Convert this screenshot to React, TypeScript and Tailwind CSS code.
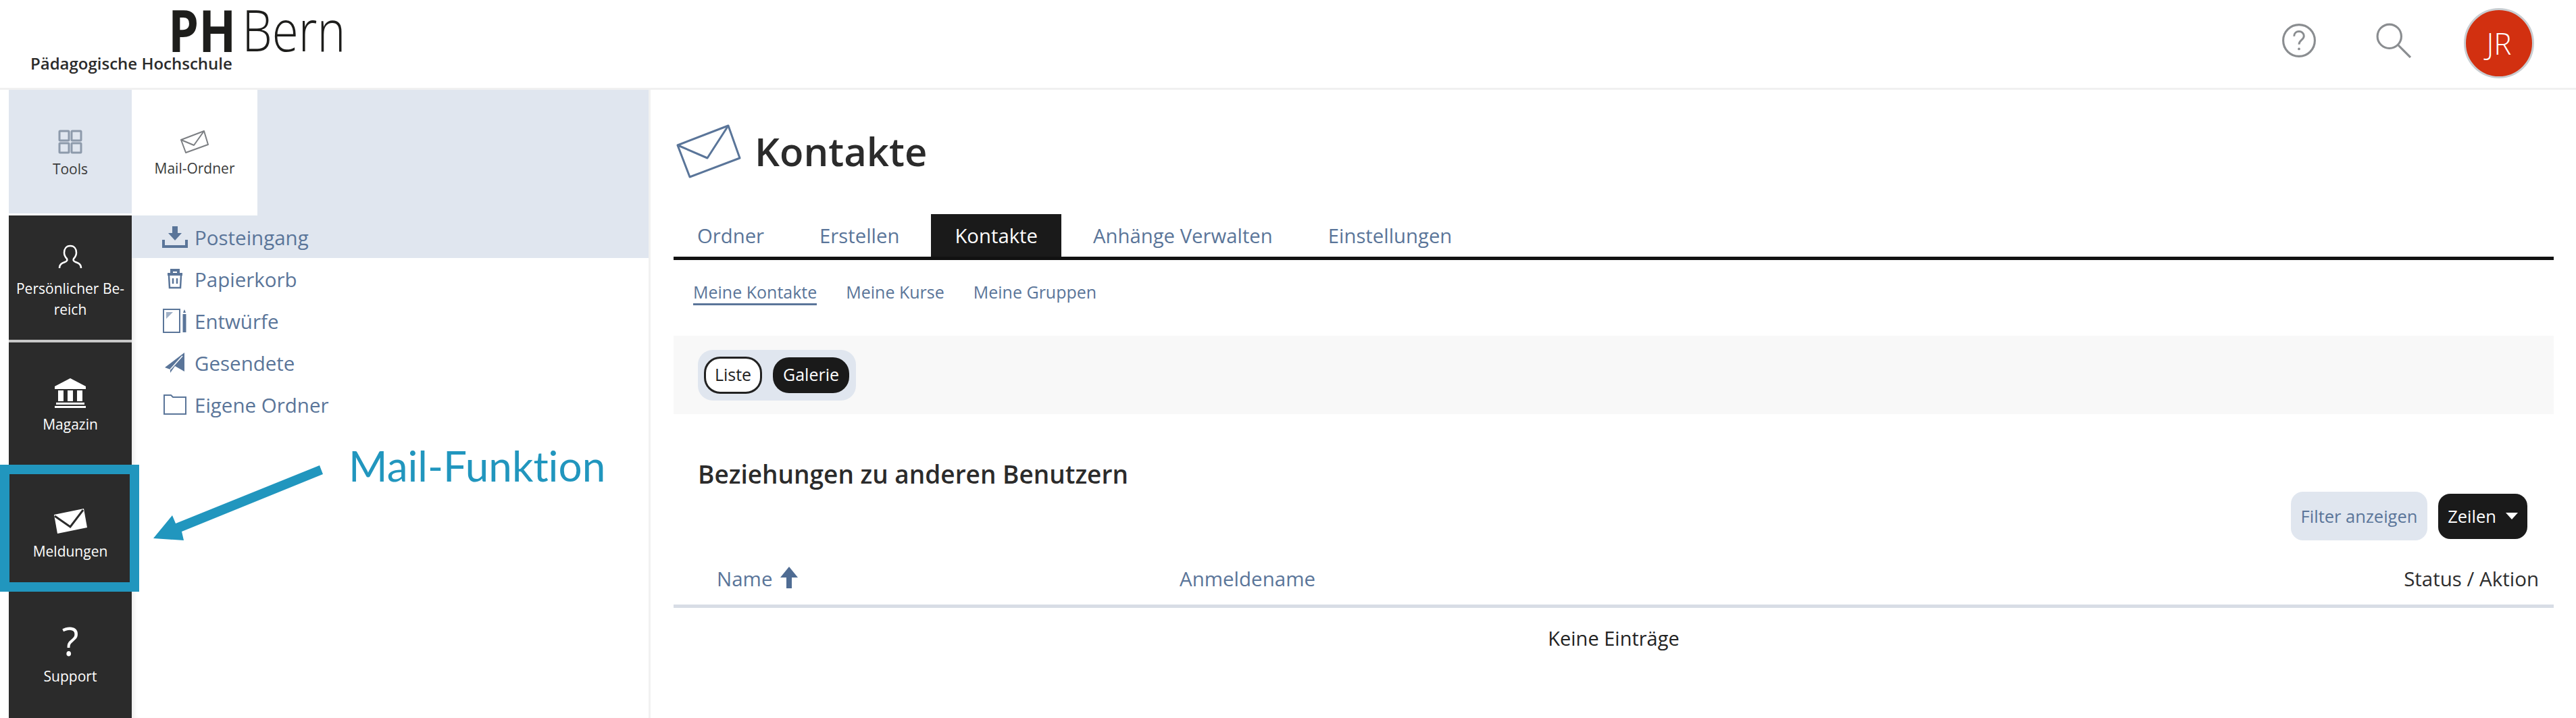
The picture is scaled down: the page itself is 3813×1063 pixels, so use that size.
import React from "react";

const Nav = ({ label, icon, className = "" }: { label: React.ReactNode; icon: React.ReactNode; className?: string }) => (
  <div className={`flex flex-col items-center bg-[#2b2b2b] text-white ${className}`}>
    {icon}
    {label}
  </div>
);

const Row = ({ icon, label, active = false }: { icon: React.ReactNode; label: string; active?: boolean }) => (
  <div className={`flex items-center pl-[45px] gap-[10px] text-[29.5px] text-[#5a7599] ${active ? "h-[63px] bg-[#e0e6ef]" : "h-[62px]"}`}>
    <span className="flex w-[38px] justify-center">{icon}</span>
    <span className="pt-[3px]">{label}</span>
  </div>
);

const tabs = ["Ordner", "Erstellen", "Kontakte", "Anhänge Verwalten", "Einstellungen"];

export default function App() {
  return (
    <div className="relative flex h-[1063px] w-[3813px] flex-col overflow-hidden bg-white font-['Open_Sans',sans-serif] text-[#2d2d2d]">
      <header className="flex h-[133px] shrink-0 items-start justify-between border-b-[3px] border-[#f0f0f0]">
        <div className="pl-[45px]">
          <div className="ml-[204px] mt-[14px] flex h-[74px] origin-bottom scale-y-[1.2] items-center text-[72px] leading-[74px] text-[#1d1d1b]">
            <b className="font-bold">PH</b>
            <span className="ml-[9px] text-[71px] font-light">Bern</span>
          </div>
          <div className="mt-[-8px] text-[24px] font-semibold leading-[28px] text-[#2b2b2b]">Pädagogische Hochschule</div>
        </div>
        <div className="mr-[62px] mt-[12px] flex items-start">
          <svg viewBox="0 0 50 50" className="mr-[88px] mt-[22px] h-[52px] w-[52px]" fill="none" stroke="#8a8d90" strokeWidth="3">
            <circle cx="25" cy="25" r="22.5" />
            <path d="M18 19c0-4.500 3.300-7 7-7s7 2.500 7 6.500c0 5.500-7 6-7 12" strokeWidth="2.800" />
            <circle cx="25" cy="37" r="1.800" fill="#8a8d90" stroke="none" />
          </svg>
          <svg viewBox="0 0 50 50" className="mr-[78px] mt-[22px] h-[52px] w-[52px]" fill="none" stroke="#8a8d90" strokeWidth="3">
            <circle cx="19" cy="19" r="17" />
            <path d="M31 31 49 49" />
          </svg>
          <div className="flex h-[104px] w-[104px] items-center justify-center rounded-full border-[3px] border-[#c9cdd1] bg-[#d23010] text-[44px] font-light text-white">JR</div>
        </div>
      </header>

      <div className="flex min-h-0 flex-1">
        <aside className="flex w-[195px] shrink-0 flex-col bg-white pl-[13px] text-center text-[21px] leading-[31px]">
          <div className="flex h-[183px] flex-col items-center bg-[#e0e6ef] pt-[59px] text-[#3a3a3a]">
            <svg viewBox="0 0 36 36" className="h-[36px] w-[36px]" fill="none" stroke="#8d9aab" strokeWidth="3">
              <rect x="2" y="2" width="14" height="14" rx="1" />
              <rect x="20" y="2" width="14" height="14" rx="1" />
              <rect x="2" y="20" width="14" height="14" rx="1" />
              <rect x="20" y="20" width="14" height="14" rx="1" />
            </svg>
            <span className="mt-[7px]">Tools</span>
          </div>
          <div className="h-[3px] bg-white" />
          <Nav
            className="h-[184px] pt-[43px]"
            icon={
              <svg viewBox="0 0 36 36" className="h-[36px] w-[36px]" fill="none" stroke="#fff" strokeWidth="2.500">
                <path d="M18 2c-6 0-9 4.500-9 10 0 4 2 7 4 9 1 2 0 4-3 5-4 1.500-8 3-8 9M18 2c6 0 9 4.500 9 10 0 4-2 7-4 9-1 2 0 4 3 5 4 1.500 8 3 8 9" />
              </svg>
            }
            label={<span className="mt-[14px]">Persönlicher Be-<br />reich</span>}
          />
          <div className="h-[4px] bg-[#c8c8c8]" />
          <Nav
            className="h-[181px] pt-[53px]"
            icon={
              <svg viewBox="0 0 46 44" className="h-[44px] w-[46px]" fill="#fff">
                <path d="M23 0 46 12v4H0v-4Z" />
                <path d="M5 18h8v16H5ZM19 18h8v16h-8ZM33 18h8v16h-8ZM2 36h42v3H2ZM0 41h46v3H0Z" />
              </svg>
            }
            label={<span className="mt-[9px]">Magazin</span>}
          />
          <div className="h-[4px] bg-white" />
          <Nav
            className="h-[174px] pt-[61px]"
            icon={
              <svg viewBox="0 0 49 37" className="h-[37px] w-[49px]">
                <path d="M0 9 44 0 49 28 5 37Z" fill="#fff" />
                <path d="M1 11 24 27 43 2" fill="none" stroke="#2b2b2b" strokeWidth="3" />
              </svg>
            }
            label={<span className="mt-[11px]">Meldungen</span>}
          />
          <div className="h-[4px] bg-[#c8c8c8]" />
          <Nav
            className="flex-1 pt-[50px]"
            icon={<span className="text-[58px] leading-[58px]">?</span>}
            label={<span className="mt-[8px]">Support</span>}
          />
        </aside>

        <nav className="w-[765px] shrink-0 shadow-[inset_8px_0_8px_-6px_#e6e6e6]">
          <div className="bg-[#e0e6ef]">
            <div className="flex h-[186px] w-[186px] flex-col items-center bg-white pt-[60px] text-[21px] leading-[31px] text-[#3a3a3a]">
              <svg viewBox="0 0 42 34" className="h-[34px] w-[42px]" fill="none" stroke="#7c7f83" strokeWidth="2" strokeLinejoin="round">
                <path d="M1 14 35 1 41 21 8 33Z" />
                <path d="M1 14 20 22 35 1" />
              </svg>
              <span className="mt-[7px]">Mail-Ordner</span>
            </div>
            <Row
              active
              label="Posteingang"
              icon={
                <svg viewBox="0 0 38 32" className="h-[32px] w-[38px]" fill="#5a7599">
                  <path d="M15 0h8v10h6L19 21 9 10h6Z" />
                  <path d="M0 20h4v8h30v-8h4v12H0Z" />
                </svg>
              }
            />
          </div>
          <Row
            label="Papierkorb"
            icon={
              <svg viewBox="0 0 24 30" className="h-[30px] w-[24px]" fill="none" stroke="#5a7599" strokeWidth="2.500">
                <path d="M1 8h22M7 7V2h10v5" strokeWidth="4" />
                <path d="M3 10l1 18h16l1-18" />
                <path d="M9 14v8M15 14v8" />
              </svg>
            }
          />
          <Row
            label="Entwürfe"
            icon={
              <svg viewBox="0 0 36 36" className="h-[36px] w-[36px]" fill="none" stroke="#5a7599" strokeWidth="2">
                <path d="M1 1h24v34H1Z" />
                <path d="M5 5h10L5 15Z" fill="#9fb0c6" stroke="none" />
                <path d="M32 8v27" strokeWidth="5" />
                <path d="M30 6 32 1l2 5Z" fill="#5a7599" stroke="none" />
              </svg>
            }
          />
          <Row
            label="Gesendete"
            icon={
              <svg viewBox="0 0 30 30" className="h-[30px] w-[30px]">
                <path d="M29 0V28L15 20 8 30V25L0 22Z" fill="#5a7599" />
                <path d="M8 25 26 5" fill="none" stroke="#fff" strokeWidth="1.500" />
              </svg>
            }
          />
          <Row
            label="Eigene Ordner"
            icon={
              <svg viewBox="0 0 34 30" className="h-[30px] w-[34px]" fill="none" stroke="#5a7599" strokeWidth="2">
                <path d="M1 1h10l3 3h19v25H1Z" />
              </svg>
            }
          />
        </nav>

        <main className="flex min-w-0 flex-1 flex-col border-l-[3px] border-[#f1f1f1] pl-[34px] pr-[33px]">
          <div className="flex h-[184px] items-center pb-[8px] pl-[4px] pt-[6px]">
            <svg viewBox="0 0 96 80" className="h-[80px] w-[96px]" fill="none" stroke="#5a7599" strokeWidth="3" strokeLinejoin="round">
              <path d="M2 31 77 2 94 50 20 78Z" />
              <path d="M2 31 46 50 77 2" />
            </svg>
            <h1 className="ml-[20px] text-[58px] font-semibold leading-none text-[#2b2b2b]">Kontakte</h1>
          </div>
          <div className="flex gap-[12px] border-b-[5px] border-[#111]">
            {tabs.map((t) => (
              <div key={t} className={`flex h-[63px] items-center px-[35px] pt-[3px] text-[29.3px] ${t === "Kontakte" ? "bg-[#1a1a1a] text-white" : "text-[#5a7599]"}`}>{t}</div>
            ))}
          </div>
          <div className="flex h-[112px] items-start gap-[43px] pl-[29px] pt-[30px] text-[25px] leading-[34px] text-[#5a7599]">
            <span className="border-b-[3px] border-[#5a7599]">Meine Kontakte</span>
            <span>Meine Kurse</span>
            <span>Meine Gruppen</span>
          </div>
          <div className="flex h-[116px] items-center bg-[#f8f8f8] pl-[36px]">
            <div className="flex h-[75px] w-[234px] items-center gap-[16px] rounded-[22px] bg-[#e0e6ef] px-[9px] text-[25px]">
              <span className="flex h-[55px] w-[86px] items-center justify-center rounded-[24px] border-[3px] border-[#222] bg-white text-[#222]">Liste</span>
              <span className="flex h-[53px] w-[113px] items-center justify-center rounded-[24px] bg-[#1a1a1a] text-white">Galerie</span>
            </div>
          </div>
          <h2 className="mt-[64px] pl-[36px] text-[37px] font-semibold leading-[50px] text-[#2b2b2b]">Beziehungen zu anderen Benutzern</h2>
          <div className="mt-[1px] flex items-center justify-end gap-[16px] pr-[39px] text-[25.5px]">
            <span className="flex h-[72px] w-[202px] items-center justify-center rounded-[18px] bg-[#e0e6ef] text-[#5a7599]">Filter anzeigen</span>
            <span className="flex h-[67px] w-[132px] items-center justify-center gap-[14px] rounded-[18px] bg-[#1a1a1a] text-white">
              Zeilen
              <svg viewBox="0 0 18 10" className="h-[10px] w-[18px]" fill="#fff"><path d="M0 0h18L9 10Z" /></svg>
            </span>
          </div>
          <div className="flex h-[100px] items-center border-b-[5px] border-[#d8dde5] pt-[20px] text-[29.5px] text-[#5a7599]">
            <span className="ml-[64px] flex w-[685px] items-center gap-[12px]">
              Name
              <svg viewBox="0 0 26 32" className="mt-[-6px] h-[32px] w-[26px]" fill="#4f6c93"><path d="M13 0 26 16H17V32H9V16H0Z" /></svg>
            </span>
            <span>Anmeldename</span>
            <span className="ml-auto pr-[22px] text-[#2d2d2d]">Status / Aktion</span>
          </div>
          <div className="mt-[26px] text-center text-[29px] leading-[38px] text-[#222]">Keine Einträge</div>
        </main>
      </div>

      {/* annotation over the screenshot */}
      <div className="absolute left-0 top-[688px] h-[188px] w-[206px] border-[14px] border-[#2196be]" />
      <svg className="absolute left-[220px] top-[680px] h-[130px] w-[270px]" viewBox="220 680 270 130" fill="#2196be">
        <path d="M473 689 478 702 269 787 272 800 227 797 255 763 260 775Z" />
      </svg>
      <div className="absolute left-[516px] top-[650px] font-['Lato',sans-serif] text-[62px] leading-[78px] text-[#2196be] [font-variant-ligatures:none]">Mail-Funktion</div>
    </div>
  );
}
